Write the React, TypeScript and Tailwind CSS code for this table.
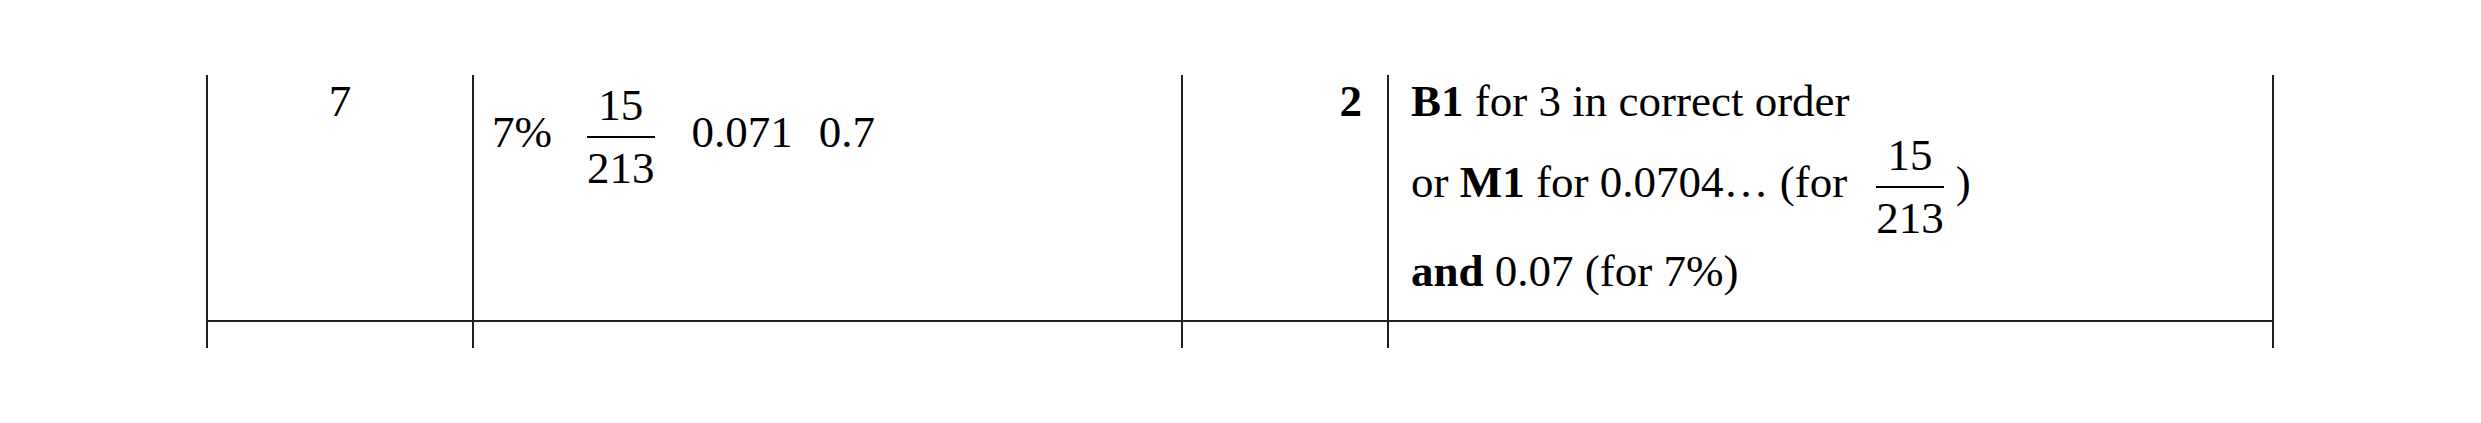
const Fraction = ({ top, bottom }: { top: string; bottom: string }) => (
  <span className="inline-flex flex-col items-center align-middle px-[2px]">
    <span className="leading-[45px]">{top}</span>
    <span className="mt-2 mb-2 h-[2px] w-full bg-black" />
    <span className="leading-[45px]">{bottom}</span>
  </span>
);

const cells = [
  "w-[266px]",
  "w-[709px]",
  "w-[206px]",
  "w-[887px] border-r-2",
];

export default function App() {
  return (
    <div className="min-h-[423px] bg-white pt-[75px] pl-[206px] font-['Liberation_Serif','Times_New_Roman',Times,serif] text-[45px] leading-[48px] text-black">
      <div className="flex h-[247px] w-[2068px] border-b-2 border-[#1f1f1f]">
        <div className={`${cells[0]} shrink-0 border-l-2 border-[#1f1f1f] pt-[2px] text-center`}>
          7
        </div>
        <div className={`${cells[1]} shrink-0 border-l-2 border-[#1f1f1f] pt-[8px] pl-[18px] whitespace-nowrap`}>
          <span>7%</span>
          <span className="ml-[33px]">
            <Fraction top="15" bottom="213" />
          </span>
          <span className="ml-[35px]">0.071</span>
          <span className="ml-[26px]">0.7</span>
        </div>
        <div className={`${cells[2]} shrink-0 border-l-2 border-[#1f1f1f] pt-[2px] pr-[25px] text-right font-bold`}>
          2
        </div>
        <div className={`${cells[3]} shrink-0 border-l-2 border-[#1f1f1f] pt-[2px] pl-[22px] whitespace-nowrap`}>
          <div>
            <b>B1</b> for 3 in correct order
          </div>
          <div className="mt-[8px]">
            or <b>M1</b> for 0.0704… (for
            <span className="ml-[27px]">
              <Fraction top="15" bottom="213" />
            </span>
            <span className="ml-[10px]">)</span>
          </div>
          <div className="mt-[6px]">
            <b>and</b> 0.07 (for 7%)
          </div>
        </div>
      </div>
      <div className="flex h-[26px]">
        {cells.map((c, i) => (
          <div key={i} className={`${c} shrink-0 border-l-2 border-[#1f1f1f]`} />
        ))}
      </div>
    </div>
  );
}
